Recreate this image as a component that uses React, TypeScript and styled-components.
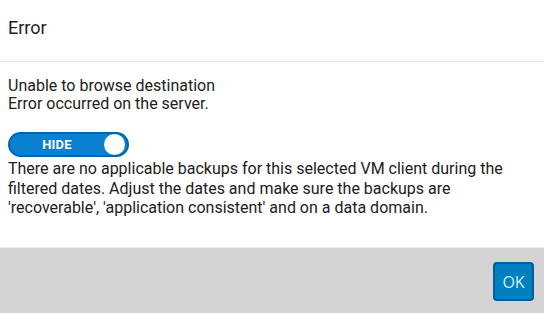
import React, { useState } from "react";
import styled, { createGlobalStyle } from "styled-components";

const Global = createGlobalStyle`
  html, body { margin: 0; padding: 0; background: #ffffff; }
  body { font-family: Roboto, "Liberation Sans", sans-serif; }
`;

const Dialog = styled.div`
  width: 544px;
  height: 313px;
  display: flex;
  flex-direction: column;
  background: #ffffff;
  color: #212121;
`;

const Header = styled.div`
  height: 62px;
  display: flex;
  align-items: center;
  padding: 0 8px 6px;
  border-bottom: 1px solid #e8e8e8;
  font-size: 18px;
  font-weight: 400;
  color: #1f1f1f;
  box-sizing: border-box;
  flex-shrink: 0;
`;

const Body = styled.div`
  flex: 1;
  padding: 15px 8px 0;
  font-size: 16px;
  border-bottom: 1px solid #ececec;
`;

const Message = styled.div<{ $lh: number }>`
  line-height: ${(p) => p.$lh}px;
`;

const Toggle = styled.button<{ $on: boolean }>`
  margin: 19px 0 2px;
  width: 121px;
  height: 25px;
  border-radius: 13px;
  border: 2px solid #0068aa;
  background: #0a80d0;
  display: flex;
  align-items: center;
  padding: 0 2px 0 0;
  box-sizing: border-box;
  cursor: pointer;
  font-family: Roboto, "Liberation Sans", sans-serif;
`;

const ToggleLabel = styled.span`
  flex: 1;
  text-align: center;
  color: #ffffff;
  font-weight: 700;
  font-size: 13px;
  letter-spacing: 0.2px;
`;

const Knob = styled.span`
  width: 21px;
  height: 21px;
  border-radius: 50%;
  background: #ffffff;
  flex-shrink: 0;
`;

const Footer = styled.div`
  height: 65px;
  background: #d3d3d3;
  display: flex;
  align-items: flex-start;
  justify-content: flex-end;
  padding: 14px 10px 0 0;
  box-sizing: border-box;
  flex-shrink: 0;
`;

const OkButton = styled.button`
  width: 41px;
  height: 39px;
  border-radius: 4px;
  border: 2px solid #00609a;
  background: #0080c0;
  color: #d6eefa;
  font-family: "Open Sans", "Liberation Sans", sans-serif;
  font-size: 16px;
  padding: 0;
  cursor: pointer;
`;

export default function App() {
  const [shown, setShown] = useState(true);
  return (
    <>
      <Global />
      <Dialog>
        <Header>Error</Header>
        <Body>
          <Message $lh={18}>
            Unable to browse destination
            <br />
            Error occurred on the server.
          </Message>
          <Toggle $on={shown} onClick={() => setShown(!shown)}>
            <ToggleLabel>HIDE</ToggleLabel>
            <Knob />
          </Toggle>
          {shown && (
            <Message $lh={19.5}>
              There are no applicable backups for this selected VM client during the
              filtered dates. Adjust the dates and make sure the backups are
              'recoverable', 'application consistent' and on a data domain.
            </Message>
          )}
        </Body>
        <Footer>
          <OkButton>OK</OkButton>
        </Footer>
      </Dialog>
    </>
  );
}
